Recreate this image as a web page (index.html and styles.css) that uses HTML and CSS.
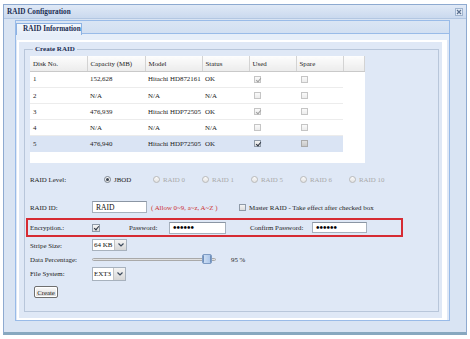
FILE: index.html
```html
<!DOCTYPE html>
<html lang="en">
<head>
    <meta charset="UTF-8">
    <title>RAID Configuration</title>
    <link rel="stylesheet" href="styles.css">
</head>
<body>

<div class="win">
    <div class="win-title">
        <span>RAID Configuration</span>
        <svg class="win-close" width="8" height="8" viewBox="0 0 8 8">
            <rect x="0.5" y="0.5" width="7" height="7" fill="#e4ecf7" stroke="#9fb4cf"/>
            <path d="M2 2 L6 6 M6 2 L2 6" stroke="#5a6f8e" stroke-width="1.2"/>
        </svg>
    </div>

    <div class="win-body">
        <div class="tab-strip">
            <div class="tab-row">
                <div class="tab">RAID Information</div>
            </div>
            <div class="tab-spacer"></div>
        </div>

        <div class="tab-body">
            <div class="frame">
                <fieldset class="create">
                    <legend>Create RAID</legend>

                    <div class="grid">
                        <table class="grid-head">
                            <colgroup>
                                <col style="width:57px"><col style="width:58px"><col style="width:57px">
                                <col style="width:47px"><col style="width:47px"><col style="width:47px"><col>
                            </colgroup>
                            <tr>
                                <td>Disk No.</td><td>Capacity (MB)</td><td>Model</td>
                                <td>Status</td><td>Used</td><td>Spare</td><td></td>
                            </tr>
                        </table>
                        <table class="grid-body">
                            <colgroup>
                                <col style="width:57px"><col style="width:58px"><col style="width:57px">
                                <col style="width:47px"><col style="width:47px"><col style="width:47px">
                            </colgroup>
                            <tr>
                                <td>1</td><td>152,628</td><td>Hitachi HD872161</td><td>OK</td>
                                <td><span class="cb off on"></span></td><td><span class="cb off"></span></td>
                            </tr>
                            <tr>
                                <td>2</td><td>N/A</td><td>N/A</td><td>N/A</td>
                                <td><span class="cb off"></span></td><td><span class="cb off"></span></td>
                            </tr>
                            <tr>
                                <td>3</td><td>476,939</td><td>Hitachi HDP72505</td><td>OK</td>
                                <td><span class="cb off on"></span></td><td><span class="cb off"></span></td>
                            </tr>
                            <tr>
                                <td>4</td><td>N/A</td><td>N/A</td><td>N/A</td>
                                <td><span class="cb off"></span></td><td><span class="cb off"></span></td>
                            </tr>
                            <tr class="sel">
                                <td>5</td><td>476,940</td><td>Hitachi HDP72505</td><td>OK</td>
                                <td><span class="cb on"></span></td><td><span class="cb grey"></span></td>
                            </tr>
                        </table>
                    </div>

                    <div class="row level">
                        <span class="lbl">RAID Level:</span>
                        <span class="opts">
                            <span class="opt"><span class="radio checked"></span>JBOD</span>
                            <span class="opt dis"><span class="radio"></span>RAID 0</span>
                            <span class="opt dis"><span class="radio"></span>RAID 1</span>
                            <span class="opt dis"><span class="radio"></span>RAID 5</span>
                            <span class="opt dis"><span class="radio"></span>RAID 6</span>
                            <span class="opt dis"><span class="radio"></span>RAID 10</span>
                        </span>
                    </div>

                    <div class="row raid-id">
                        <span class="lbl">RAID ID:</span>
                        <span class="input id-input">RAID</span>
                        <span class="hint">( Allow 0~9, a~z, A~Z )</span>
                        <span class="cb"></span>
                        <span class="master">Master RAID - Take effect after checked box</span>
                    </div>

                    <div class="row enc">
                        <span class="lbl">Encryption.:</span>
                        <span class="cb big on"></span>
                        <span class="pw-lbl">Password:</span>
                        <span class="input pw">&bull;&bull;&bull;&bull;&bull;&bull;</span>
                        <span class="cpw-lbl">Confirm Password:</span>
                        <span class="input pw cpw">&bull;&bull;&bull;&bull;&bull;&bull;</span>
                    </div>

                    <div class="row stripe">
                        <span class="lbl">Stripe Size:</span>
                        <span class="select">
                            <span class="sel-val">64 KB</span>
                            <span class="sel-btn">
                                <svg width="6" height="4" viewBox="0 0 6 4"><path d="M0.5 0.5 L3 3 L5.5 0.5" fill="none" stroke="#3c4a5c" stroke-width="1.2"/></svg>
                            </span>
                        </span>
                    </div>

                    <div class="row data">
                        <span class="lbl">Data Percentage:</span>
                        <span class="slider">
                            <span class="track"></span>
                            <span class="thumb"></span>
                        </span>
                        <span class="pct">95 %</span>
                    </div>

                    <div class="row fs">
                        <span class="lbl">File System:</span>
                        <span class="select fs-select">
                            <span class="sel-val">EXT3</span>
                            <span class="sel-btn">
                                <svg width="6" height="4" viewBox="0 0 6 4"><path d="M0.5 0.5 L3 3 L5.5 0.5" fill="none" stroke="#3c4a5c" stroke-width="1.2"/></svg>
                            </span>
                        </span>
                    </div>

                    <button class="btn-create">Create</button>
                </fieldset>
            </div>
        </div>
    </div>
</div>

</body>
</html>
```

FILE: styles.css
```css
* {
    box-sizing: border-box;
}

body {
    margin: 0;
    background: #fff;
    font-family: "Liberation Serif", "Times New Roman", serif;
    font-size: 6.9px;
    color: #1c1c1c;
}

.win {
    margin: 4px 0 0 3px;
    width: 464px;
    height: 331px;
    border: 1px solid #8eaad0;
    border-bottom: 3px solid #87a8bf;
    background: #d9e4f3;
}

.win-title {
    height: 14px;
    display: flex;
    align-items: center;
    justify-content: space-between;
    padding: 0 3px 0 3px;
    background: linear-gradient(#e0e9f6, #cad9ee);
    border-bottom: 1px solid #b3c7e2;
    font-weight: bold;
    font-size: 7.2px;
    color: #1b2d52;
}

.win-body {
    padding: 1px 16px 0 11px;
}

/* tabs */
.tab-strip {
    border: 1px solid #99bbe8;
    border-bottom: none;
    background: linear-gradient(#dae5f4, #cddcf0);
}

.tab-row {
    height: 13px;
    padding: 1px 0 0 0;
    border-bottom: 1px solid #99bbe8;
}

.tab {
    width: 66px;
    height: 12px;
    line-height: 11px;
    padding-left: 6px;
    border: 1px solid #8db2e3;
    border-bottom: none;
    background: linear-gradient(#f3f7fc, #e6eef9);
    font-weight: bold;
    font-size: 7.2px;
    color: #1b2d52;
    position: relative;
    top: 1px;
}

.tab-spacer {
    height: 6px;
    background: #e6eef9;
}

.tab-body {
    height: 281px;
    border: 1px solid #99bbe8;
    border-top: none;
    background: #dfe8f6;
    padding: 0 2px 0 1px;
}

.frame {
    height: 280px;
    border: 2px solid #fff;
    border-right-width: 5px;
    padding: 2px 3px 0 5px;
}

fieldset.create {
    margin: 0;
    height: 268px;
    border: 1px solid #b8c6da;
    padding: 1px 0 0 5px;
    background: #dfe8f6;
}

legend {
    margin-left: 3px;
    padding: 0 2px;
    line-height: 11px;
    font-weight: bold;
    font-size: 7px;
    color: #1b2d52;
}

/* grid */
.grid {
    width: 335px;
    height: 107px;
    background: #fff;
}

.grid table {
    border-collapse: collapse;
    table-layout: fixed;
}

.grid td {
    padding: 0 0 0 3px;
    white-space: nowrap;
    overflow: hidden;
}

.grid-head {
    width: 335px;
}

.grid-head td {
    height: 15px;
    background: linear-gradient(#fdfdfd, #ececec);
    border-right: 1px solid #d3d3d3;
    border-bottom: 1px solid #c9c9c9;
}

.grid-body {
    width: 313px;
}

.grid-body td {
    height: 16px;
    padding-bottom: 1px;
    border-bottom: 1px solid #ececec;
}

.grid-body td:nth-child(n+5) {
    padding-left: 5px;
}

.grid-body tr.sel td {
    background: #dae4f4;
    border-bottom-color: #dae4f4;
}

/* checkbox */
.cb {
    display: inline-block;
    flex: none;
    width: 7px;
    height: 7px;
    border: 1px solid #8f9aa8;
    background: linear-gradient(#f4f4f4, #dcdcdc);
    vertical-align: middle;
    position: relative;
}

.cb.off {
    border-color: #c5c5c5;
    background: linear-gradient(#fafafa, #ececec);
}

.cb.grey {
    border-color: #aaa;
    background: linear-gradient(#e0e0e0, #c8c8c8);
}

.cb.big {
    width: 8px;
    height: 8px;
}

.cb.on::after {
    content: "";
    position: absolute;
    left: 1.5px;
    top: 0;
    width: 2px;
    height: 4px;
    border: solid #2b3340;
    border-width: 0 1px 1px 0;
    transform: rotate(40deg);
}

.cb.off.on::after {
    border-color: #a0a0a0;
}

/* form rows */
.row {
    display: flex;
    align-items: center;
    height: 14px;
    white-space: nowrap;
}

.lbl {
    width: 62px;
    flex: none;
}

.level {
    margin-top: 9px;
}

.opts {
    display: flex;
    margin-left: 12px;
}

.opt {
    width: 49px;
    display: flex;
    align-items: center;
    gap: 3px;
}

.opt.dis {
    color: #a9a9a9;
}

.radio {
    width: 7px;
    height: 7px;
    border-radius: 50%;
    border: 1px solid #b9b9b9;
    background: linear-gradient(#fbfbfb, #e2e2e2);
    position: relative;
}

.radio.checked {
    border-color: #7d8590;
}

.radio.checked::after {
    content: "";
    position: absolute;
    left: 1px;
    top: 1px;
    width: 3px;
    height: 3px;
    border-radius: 50%;
    background: #3c4654;
}

.raid-id {
    margin-top: 14px;
}

.input {
    height: 12px;
    flex: none;
    border: 1px solid #a7b1bd;
    border-top-color: #8b96a4;
    background: #fff;
    display: flex;
    align-items: center;
    padding-left: 3px;
}

.id-input {
    width: 55px;
    font-size: 7.6px;
    color: #111;
}

.hint {
    width: 92px;
    padding-left: 4px;
    color: #cc2f2f;
}

.master {
    margin-left: 3px;
}

.enc {
    margin: 4px 0 0 -4px;
    width: 377px;
    height: 19px;
    border: 2px solid #d62b33;
    padding-left: 2px;
}

.pw-lbl {
    margin-left: 29px;
    width: 40px;
}

.pw {
    width: 57px;
    font-size: 10px;
    font-weight: bold;
    line-height: 1;
    color: #000;
}

.cpw-lbl {
    margin-left: 24px;
    width: 62px;
}

.cpw {
    width: 55px;
    height: 11px;
}

.stripe {
    margin-top: 1px;
}

.select {
    width: 35px;
    height: 12px;
    flex: none;
    display: flex;
    border: 1px solid #a7b1bd;
    background: #fff;
    font-size: 7px;
    color: #111;
}

.sel-val {
    flex: 1;
    padding-left: 1px;
    display: flex;
    align-items: center;
    overflow: hidden;
}

.sel-btn {
    width: 12px;
    flex: none;
    display: flex;
    align-items: center;
    justify-content: center;
    background: linear-gradient(#f4f4f4, #d6d6d6);
    border-left: 1px solid #c4c4c4;
}

.slider {
    width: 124px;
    height: 10px;
    flex: none;
    position: relative;
    display: flex;
    align-items: center;
}

.track {
    width: 100%;
    height: 3px;
    border: 1px solid #a9a9a9;
    border-radius: 2px;
    background: linear-gradient(#f2f2f2, #cfcfcf);
}

.thumb {
    position: absolute;
    left: 110px;
    top: 0;
    width: 10px;
    height: 10px;
    border: 1px solid #7f9cc4;
    border-radius: 2px;
    background: linear-gradient(90deg, #cfe0f5, #a9c4e8);
    box-shadow: inset 3px 0 0 -2px #6f8fba, inset -3px 0 0 -2px #6f8fba;
}

.pct {
    margin-left: 15px;
}

.fs {
    height: 15px;
}

.fs-select {
    width: 34px;
    height: 14px;
}

.btn-create {
    display: block;
    margin: 5px 0 0 4px;
    width: 24px;
    height: 12px;
    padding: 0;
    border: 1px solid #6f6f6f;
    border-radius: 2px;
    background: linear-gradient(#fafafa, #d9d9d9);
    box-shadow: inset 0 0 0 1px #fff;
    font-family: inherit;
    font-size: 6.8px;
    color: #222;
}
```
